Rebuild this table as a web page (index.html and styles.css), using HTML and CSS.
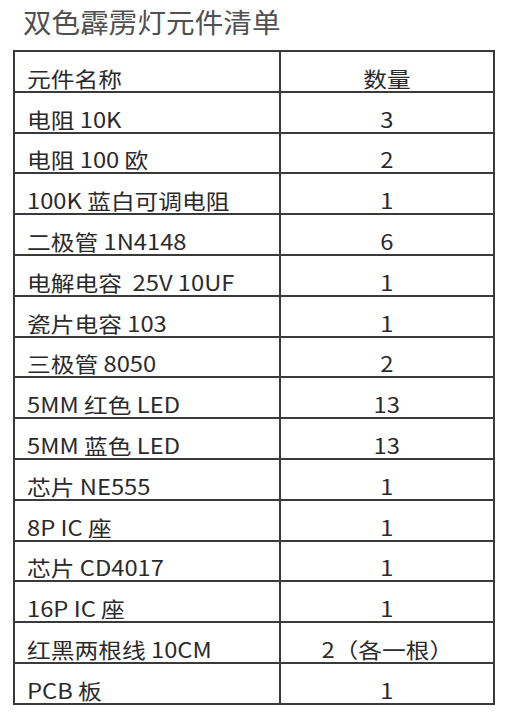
FILE: index.html
```html
<!DOCTYPE html>
<html lang="zh">
<head>
<meta charset="utf-8">
<title>双色霹雳灯元件清单</title>
<link rel="stylesheet" href="styles.css">
</head>
<body>
<h1 class="title"><span class="wide">双色霹雳灯元件清单</span></h1>
<table class="bom">
  <tr><td class="name"><span class="wide">元件名称</span></td><td class="qty"><span class="wide">数量</span></td></tr>
  <tr><td class="name"><span class="wide">电阻 10K</span></td><td class="qty"><span class="wide">3</span></td></tr>
  <tr><td class="name"><span class="wide">电阻 100 欧</span></td><td class="qty"><span class="wide">2</span></td></tr>
  <tr><td class="name"><span class="wide">100K 蓝白可调电阻</span></td><td class="qty"><span class="wide">1</span></td></tr>
  <tr><td class="name"><span class="wide">二极管 1N4148</span></td><td class="qty"><span class="wide">6</span></td></tr>
  <tr><td class="name"><span class="wide">电解电容&nbsp; 25V 10UF</span></td><td class="qty"><span class="wide">1</span></td></tr>
  <tr><td class="name"><span class="wide">瓷片电容 103</span></td><td class="qty"><span class="wide">1</span></td></tr>
  <tr><td class="name"><span class="wide">三极管 8050</span></td><td class="qty"><span class="wide">2</span></td></tr>
  <tr><td class="name"><span class="wide">5MM 红色 LED</span></td><td class="qty"><span class="wide">13</span></td></tr>
  <tr><td class="name"><span class="wide">5MM 蓝色 LED</span></td><td class="qty"><span class="wide">13</span></td></tr>
  <tr><td class="name"><span class="wide">芯片 NE555</span></td><td class="qty"><span class="wide">1</span></td></tr>
  <tr><td class="name"><span class="wide">8P IC 座</span></td><td class="qty"><span class="wide">1</span></td></tr>
  <tr><td class="name"><span class="wide">芯片 CD4017</span></td><td class="qty"><span class="wide">1</span></td></tr>
  <tr><td class="name"><span class="wide">16P IC 座</span></td><td class="qty"><span class="wide">1</span></td></tr>
  <tr><td class="name"><span class="wide">红黑两根线 10CM</span></td><td class="qty"><span class="wide">2（各一根）</span></td></tr>
  <tr><td class="name"><span class="wide">PCB 板</span></td><td class="qty"><span class="wide">1</span></td></tr>
</table>
</body>
</html>
```
FILE: styles.css
```css
html, body {
  margin: 0;
  padding: 0;
  background: #ffffff;
}
body {
  font-family: "Noto Sans CJK SC", "Noto Sans", sans-serif;
  color: #2a2a2a;
}
.wide {
  display: inline-block;
  white-space: pre;
  transform: scaleX(1.13);
  transform-origin: left center;
}
.title {
  margin: 0;
  padding: 5px 0 0 23px;
  height: 46px;
  box-sizing: border-box;
  font-size: 27px;
  font-weight: 400;
  line-height: 34px;
  color: #505050;
}
.title .wide {
  transform: scaleX(1.06);
}
.bom {
  margin: 4px 0 0 13px;
  width: 482px;
  border-collapse: collapse;
  border: 2px solid #3a3a3a;
}
.bom td {
  border: 2px solid #3a3a3a;
  height: 40.8px;
  box-sizing: border-box;
  padding: 0;
  vertical-align: bottom;
  font-size: 21px;
  line-height: 26px;
}
.bom .name {
  width: 266px;
  padding-left: 12px;
  text-align: left;
}
.bom .qty {
  text-align: center;
}
.bom .qty .wide {
  transform-origin: center center;
}
```
